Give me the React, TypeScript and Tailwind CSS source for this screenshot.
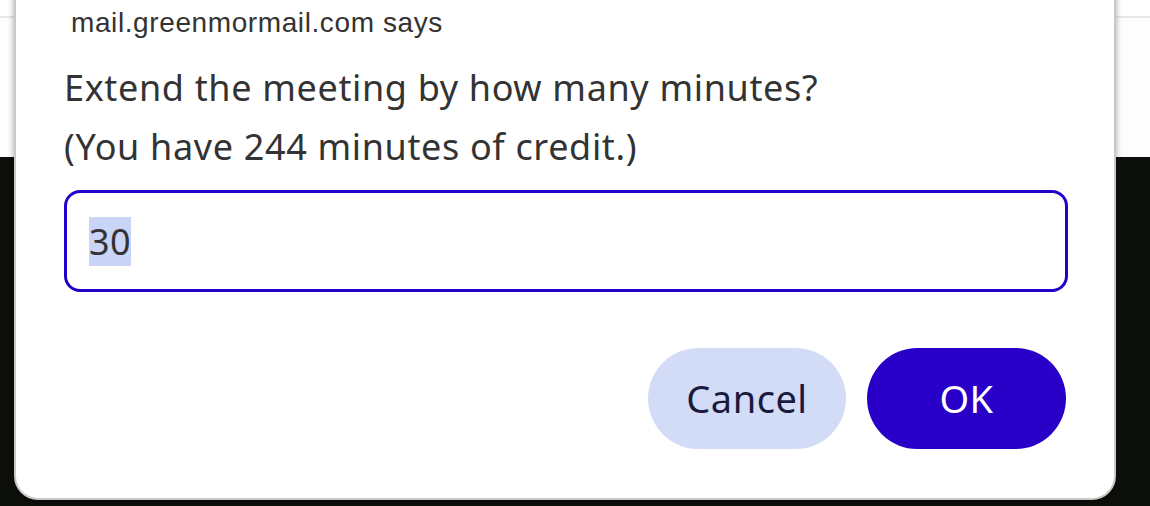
import React, { useEffect, useRef, useState } from 'react';

export default function App() {
  const [minutes, setMinutes] = useState('30');
  const inputRef = useRef<HTMLInputElement>(null);

  useEffect(() => {
    inputRef.current?.focus();
    inputRef.current?.select();
  }, []);

  return (
    <div className="relative w-[1150px] h-[506px] overflow-hidden bg-white">
      {/* Page behind the prompt */}
      <div className="flex flex-col h-full">
        <div className="h-[18px] border-b-2 border-[#e6e6e6] bg-white" />
        <div className="h-[139px] bg-[#fdfdfd]" />
        <div className="flex-1 bg-[#0c0f0a]" />
      </div>

      {/* Prompt dialog */}
      <div className="absolute left-[14px] top-[-30px] w-[1102px] h-[530px] rounded-[24px] bg-white border-2 border-[#c9c9c9] shadow-[0_2px_6px_rgba(0,0,0,0.35)] pl-[48px] pr-[46px] pt-[36px]">
        <div className="pl-[7px] text-[28px] tracking-[0.6px] leading-[30px] text-[#333] font-['Liberation_Sans',Arial,sans-serif]">
          mail.greenmormail.com says
        </div>
        <div className="mt-[20px] text-[36px] tracking-[0.65px] leading-[59px] text-[#333] font-['Noto_Sans',sans-serif]">
          <div>Extend the meeting by how many minutes?</div>
          <div>(You have 244 minutes of credit.)</div>
        </div>
        <input
          ref={inputRef}
          value={minutes}
          onChange={(e) => setMinutes(e.target.value)}
          className="mt-[14px] w-[1004px] h-[102px] rounded-[16px] border-[3px] border-[#2400c8] px-[22px] text-[36px] tracking-[0.5px] text-[#333] outline-none font-['Noto_Sans',sans-serif] selection:bg-[#c9d4f6]"
        />
        <div className="flex justify-end gap-[21px] mt-[56px] pr-[2px]">
          <button className="w-[198px] h-[101px] rounded-full bg-[#d2dcf7] text-[#1a1a3c] text-[38px] tracking-[0.5px] font-['Noto_Sans',sans-serif]">
            Cancel
          </button>
          <button className="w-[199px] h-[101px] rounded-full bg-[#2800c8] text-white text-[38px] tracking-[0.5px] font-['Noto_Sans',sans-serif]">
            OK
          </button>
        </div>
      </div>
    </div>
  );
}
